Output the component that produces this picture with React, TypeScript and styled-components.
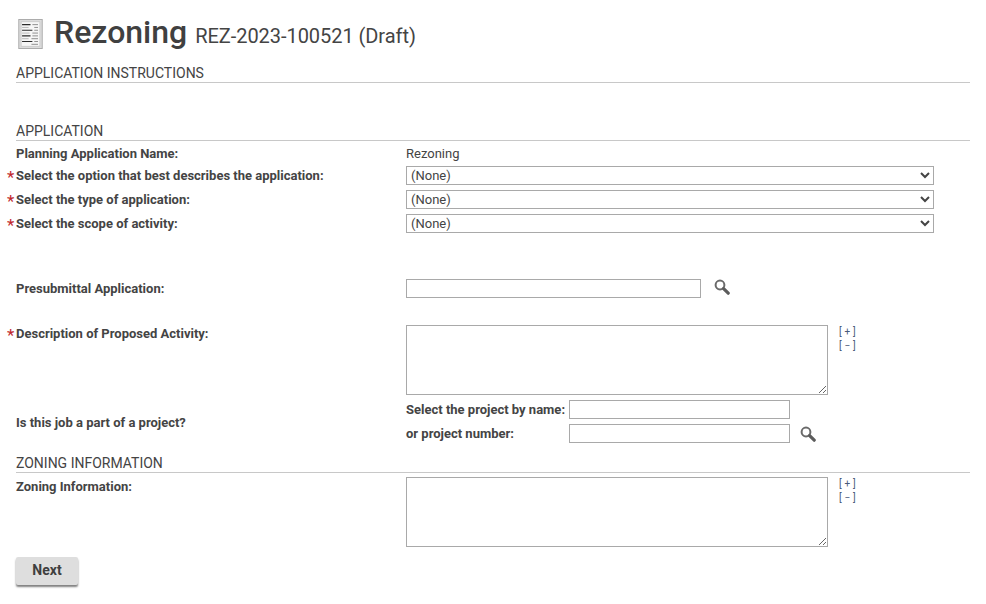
import React from 'react'
import styled, { createGlobalStyle } from 'styled-components'

const GlobalStyle = createGlobalStyle`
  html, body {
    margin: 0;
    padding: 0;
    background: #fff;
  }
  body {
    font-family: Roboto, "Liberation Sans", sans-serif;
    color: #3f3f3f;
  }
`

const Page = styled.div`
  box-sizing: border-box;
  width: 986px;
  height: 604px;
  padding: 14px 16px 0;
`

const Header = styled.div`
  display: flex;
  align-items: baseline;
  height: 36px;
  margin-left: 2px;
`

const TitleIcon = styled.svg`
  align-self: center;
  width: 25px;
  height: 30px;
  margin: 4px 11px 0 0;
  flex: none;
`

const Title = styled.h1`
  margin: 0 8px 0 0;
  font-size: 32px;
  font-weight: 500;
  line-height: 36px;
  color: #404040;
`

const SubTitle = styled.span`
  font-size: 20px;
  letter-spacing: -0.05px;
  color: #444;
`

const SectionHead = styled.div<{ $top: number }>`
  margin-top: ${({ $top }) => $top}px;
  height: 17px;
  line-height: 17px;
  font-size: 14px;
  color: #444;
  border-bottom: 1px solid #c8c8c8;
`

const Row = styled.div<{ $top?: number; $height?: number }>`
  display: grid;
  grid-template-columns: 390px 1fr;
  margin-top: ${({ $top }) => $top ?? 0}px;
  min-height: ${({ $height }) => $height ?? 19}px;
`

const Label = styled.label<{ $required?: boolean; $center?: boolean; $flush?: boolean }>`
  position: relative;
  align-self: ${({ $center }) => ($center ? 'center' : 'start')};
  height: 19px;
  font-size: 13px;
  font-weight: 700;
  line-height: ${({ $flush, $center }) => ($center ? 21 : $flush ? 17 : 19)}px;
  color: #444;

  ${({ $required }) =>
    $required &&
    `&::before {
      content: '*';
      position: absolute;
      left: -9px;
      top: 2px;
      color: #c0272d;
      font-size: 17px;
      font-weight: 400;
    }`}
`

const Value = styled.div`
  font-size: 13px;
  line-height: 19px;
  color: #444;
`

const Select = styled.select`
  display: block;
  box-sizing: border-box;
  width: 528px;
  height: 19px;
  padding: 0;
  font-family: inherit;
  font-size: 13px;
  color: #444;
  background: #fff;
  border: 1px solid #a9a9a9;
  border-radius: 0;
`

const Input = styled.input<{ $width: number }>`
  display: block;
  box-sizing: border-box;
  width: ${({ $width }) => $width}px;
  height: 19px;
  padding: 0 3px;
  font-family: inherit;
  font-size: 13px;
  background: #fff;
  border: 1px solid #a9a9a9;
  border-radius: 0;
`

const TextArea = styled.textarea`
  display: block;
  box-sizing: border-box;
  width: 422px;
  height: 70px;
  margin: 0;
  padding: 2px;
  font-family: inherit;
  font-size: 13px;
  background: #fff;
  border: 1px solid #a9a9a9;
  border-radius: 0;
`

const Inline = styled.div`
  display: flex;
  align-items: flex-start;
`

const SearchIcon = styled.svg<{ $left: number }>`
  width: 16px;
  height: 16px;
  margin-left: ${({ $left }) => $left}px;
  flex: none;
`

const Resizer = styled.div`
  margin-left: 11px;
  font-size: 10px;
  letter-spacing: 2.8px;
  line-height: 14px;
  color: #4a5a78;
`

const ProjectGrid = styled.div`
  display: grid;
  grid-template-columns: 163px auto 1fr;
  row-gap: 5px;
  align-items: center;
`

const ProjectLabel = styled.span`
  font-size: 13px;
  font-weight: 700;
  color: #444;
`

const NextButton = styled.button`
  display: block;
  width: 62px;
  height: 28px;
  margin-top: 10px;
  padding: 0 0 2px;
  font-family: inherit;
  font-size: 14px;
  font-weight: 700;
  color: #3f3f3f;
  background: #dedede;
  border: none;
  border-radius: 2px;
  box-shadow: 0 2px 2px rgba(0, 0, 0, 0.5);
`

const Search = ({ left }: { left: number }) => (
  <SearchIcon $left={left} viewBox="0 0 16 16">
    <circle cx="6" cy="6" r="4.4" fill="none" stroke="#6a6a6a" strokeWidth="2" />
    <path d="M9.6 9.6 L14.2 14.2" stroke="#5c5c5c" strokeWidth="3.2" strokeLinecap="round" />
  </SearchIcon>
)

const DocIcon = () => (
  <TitleIcon viewBox="0 0 26 32">
    <rect x="0.5" y="0.5" width="25" height="31" fill="#dcdcdc" stroke="#a8a8a8" />
    <rect x="3" y="3" width="20" height="26" fill="#f6f6f6" stroke="#bdbdbd" strokeWidth="0.6" />
    <path d="M4 6h9M4 12h11M4 18h9M4 24h11" stroke="#2c2c2c" strokeWidth="1.2" />
    <path d="M15 6h6M17 9h4M17 12h4M15 15h6M15 18h6M14 21h7M17 24h4M14 27h7" stroke="#8a8a8a" strokeWidth="1" />
    <path d="M4 9h7M4 15h8M4 21h7" stroke="#a5a5a5" strokeWidth="0.8" />
  </TitleIcon>
)

const NoneSelect = () => (
  <Select defaultValue="">
    <option value="">(None)</option>
  </Select>
)

const SizeLinks = () => (
  <Resizer>
    [+]
    <br />
    [−]
  </Resizer>
)

const App = () => {
  return (
    <>
      <GlobalStyle />
      <Page>
        <Header>
          <DocIcon />
          <Title>Rezoning</Title>
          <SubTitle>REZ-2023-100521 (Draft)</SubTitle>
        </Header>

        <SectionHead $top={15}>APPLICATION INSTRUCTIONS</SectionHead>
        <SectionHead $top={40}>APPLICATION</SectionHead>

        <Row $top={3}>
          <Label>Planning Application Name:</Label>
          <Value>Rezoning</Value>
        </Row>
        <Row $top={3}>
          <Label $required>Select the option that best describes the application:</Label>
          <NoneSelect />
        </Row>
        <Row $top={5}>
          <Label $required>Select the type of application:</Label>
          <NoneSelect />
        </Row>
        <Row $top={5}>
          <Label $required>Select the scope of activity:</Label>
          <NoneSelect />
        </Row>

        <Row $top={46}>
          <Label>Presubmittal Application:</Label>
          <Inline>
            <Input $width={295} />
            <Search left={13} />
          </Inline>
        </Row>

        <Row $top={27}>
          <Label $required $flush>Description of Proposed Activity:</Label>
          <Inline>
            <TextArea />
            <SizeLinks />
          </Inline>
        </Row>

        <Row $top={5} $height={43}>
          <Label $center>Is this job a part of a project?</Label>
          <ProjectGrid>
            <ProjectLabel>Select the project by name:</ProjectLabel>
            <Input $width={221} />
            <span />
            <ProjectLabel>or project number:</ProjectLabel>
            <Input $width={221} />
            <Search left={10} />
          </ProjectGrid>
        </Row>

        <SectionHead $top={12}>ZONING INFORMATION</SectionHead>

        <Row $top={4}>
          <Label>Zoning Information:</Label>
          <Inline>
            <TextArea />
            <SizeLinks />
          </Inline>
        </Row>

        <NextButton type="button">Next</NextButton>
      </Page>
    </>
  )
}

export default App
